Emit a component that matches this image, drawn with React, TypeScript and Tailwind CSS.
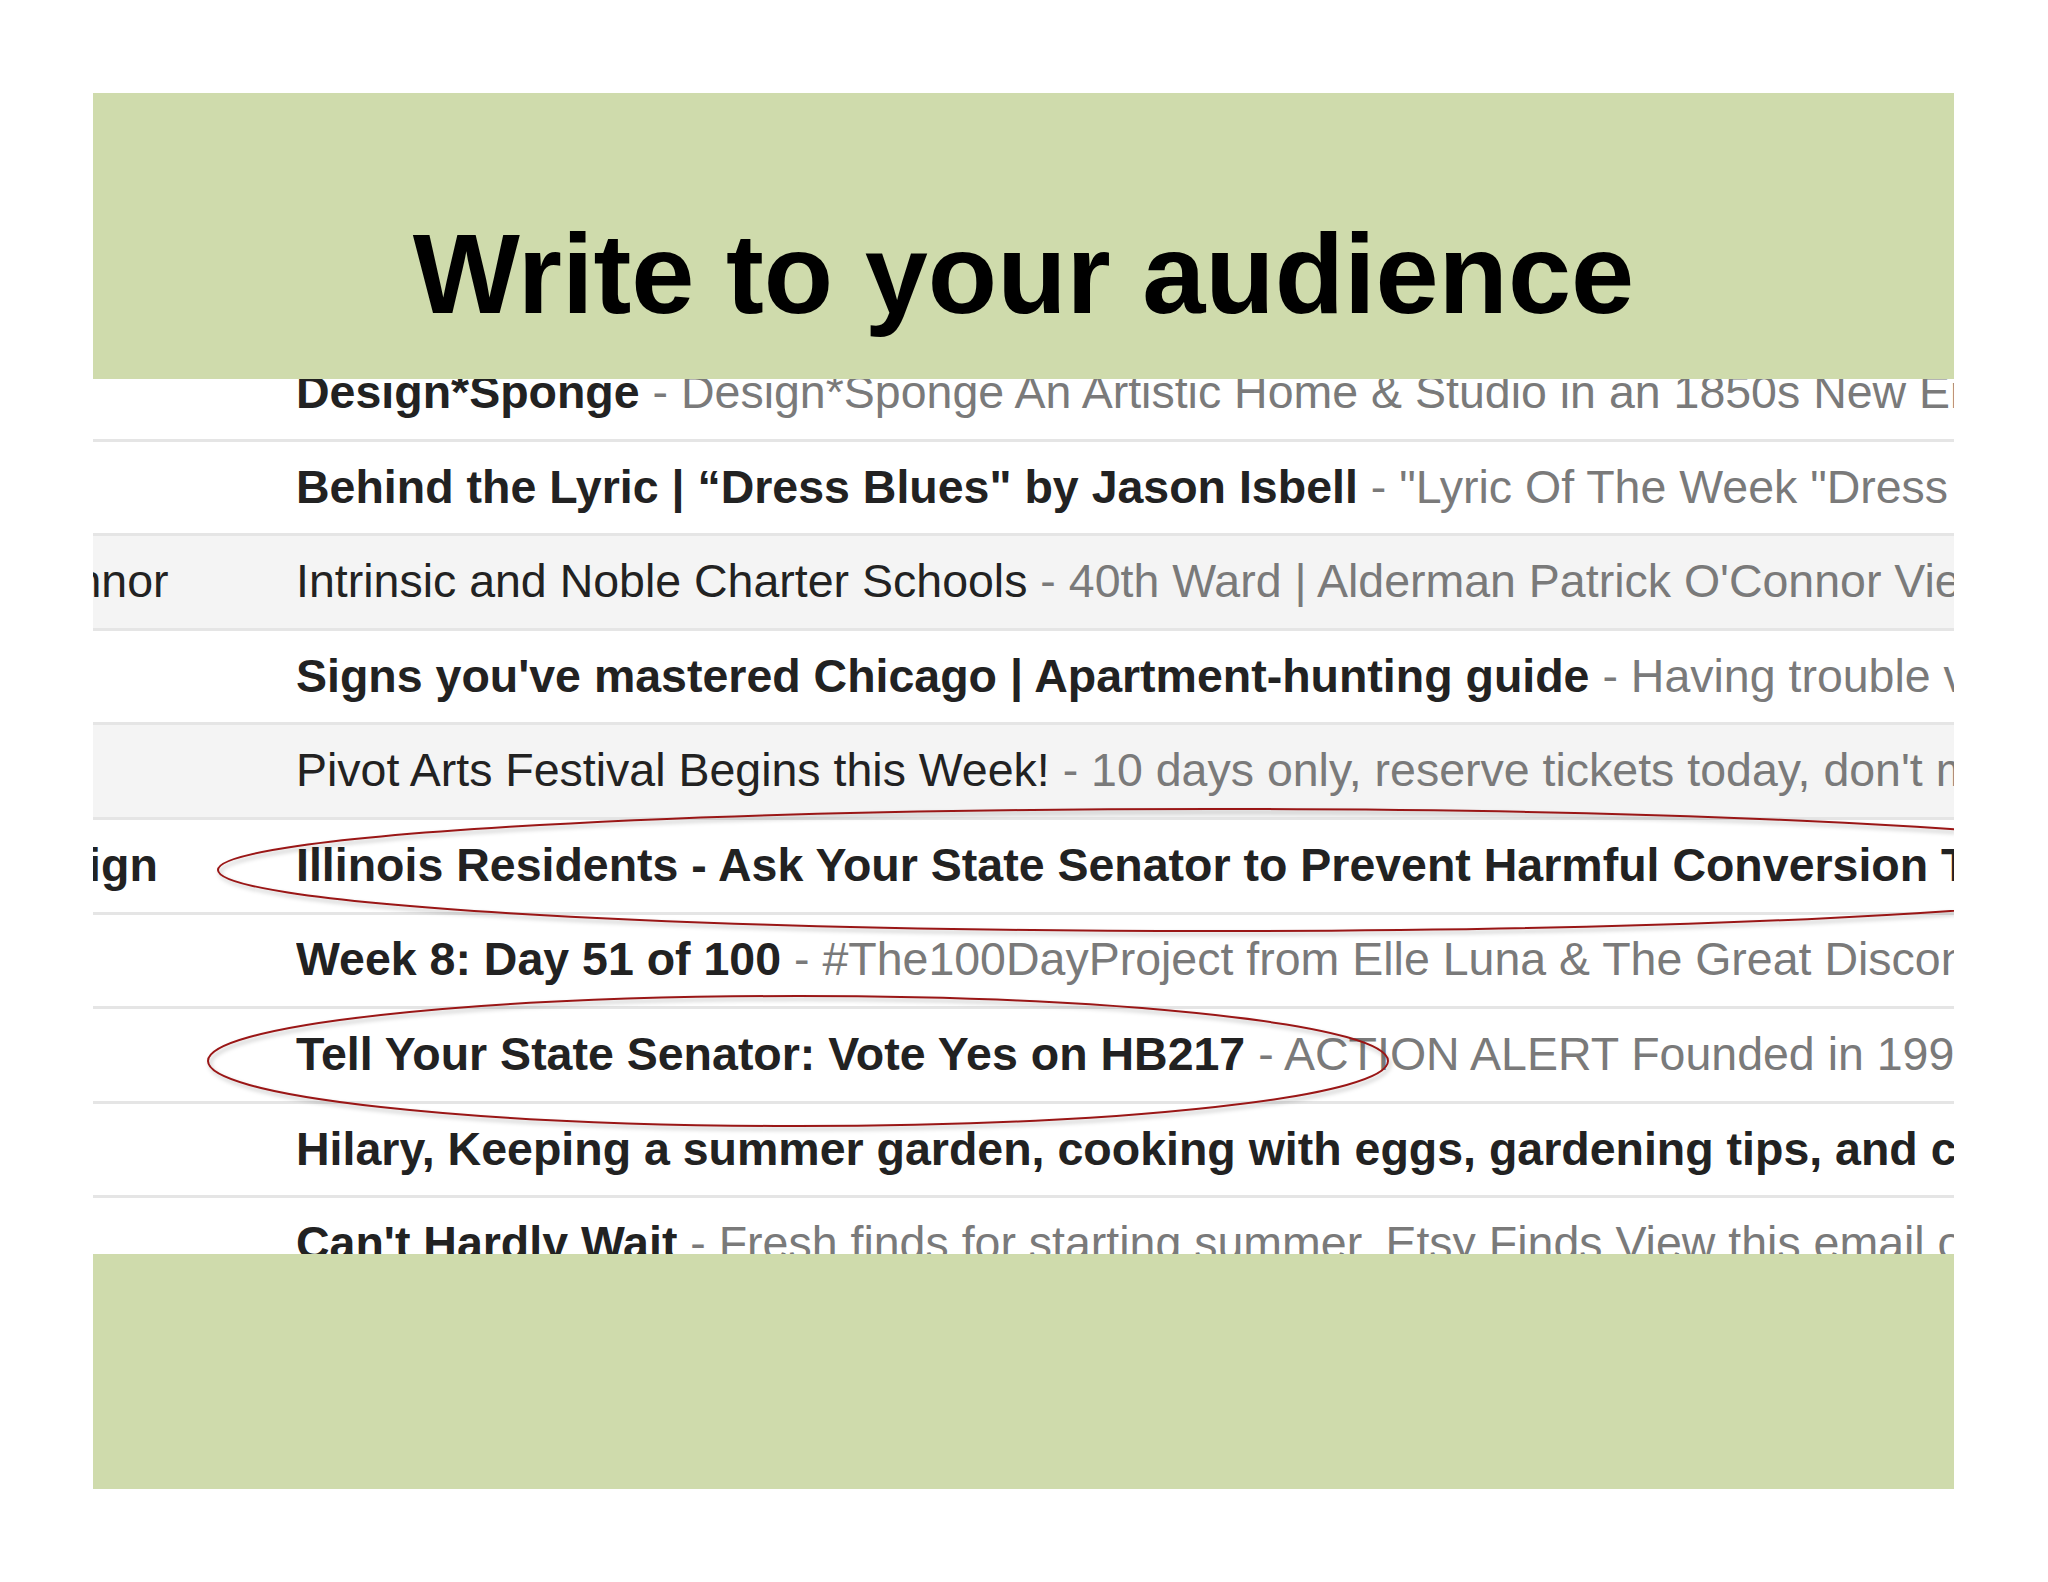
import React from "react";

type Mail = {
  sender?: string;
  senderBold?: boolean;
  senderShift?: string;
  subject: string;
  snippet?: string;
  unread: boolean;
};

const mails: Mail[] = [
  {
    subject: "Design*Sponge",
    snippet: "Design*Sponge An Artistic Home & Studio in an 1850s New England Farmhouse",
    unread: true,
  },
  {
    subject: "Behind the Lyric | \u201cDress Blues\" by Jason Isbell",
    snippet: "\"Lyric Of The Week \"Dress Blues\" by Jason Isbell",
    unread: true,
  },
  {
    sender: "Connor",
    senderShift: "-ml-[77px]",
    subject: "Intrinsic and Noble Charter Schools",
    snippet: "40th Ward | Alderman Patrick O'Connor View this email in your browser",
    unread: false,
  },
  {
    subject: "Signs you've mastered Chicago | Apartment-hunting guide",
    snippet: "Having trouble viewing this email?",
    unread: true,
  },
  {
    subject: "Pivot Arts Festival Begins this Week!",
    snippet: "10 days only, reserve tickets today, don't miss out",
    unread: false,
  },
  {
    sender: "Campaign",
    senderBold: true,
    senderShift: "-ml-[160px]",
    subject: "Illinois Residents - Ask Your State Senator to Prevent Harmful Conversion Therapy",
    unread: true,
  },
  {
    subject: "Week 8: Day 51 of 100",
    snippet: "#The100DayProject from Elle Luna & The Great Discontent",
    unread: true,
  },
  {
    subject: "Tell Your State Senator: Vote Yes on HB217",
    snippet: "ACTION ALERT Founded in 1995, Equality Illinois",
    unread: true,
  },
  {
    subject: "Hilary, Keeping a summer garden, cooking with eggs, gardening tips, and crafts",
    unread: true,
  },
  {
    subject: "Can't Hardly Wait",
    snippet: "Fresh finds for starting summer. Etsy Finds View this email online",
    unread: true,
  },
];

function MailRow({ mail }: { mail: Mail }) {
  return (
    <div
      className={`flex items-center h-[94.6px] border-b-[3px] border-[#e5e5e5] ${
        mail.unread ? "bg-white" : "bg-[#f4f4f4]"
      }`}
    >
      {/* sender column, cut off on the left */}
      <div className="w-[203px] shrink-0 overflow-hidden whitespace-nowrap">
        {mail.sender && (
          <span
            className={`inline-block text-[#222] ${mail.senderShift} ${
              mail.senderBold ? "font-bold" : "font-normal"
            }`}
          >
            {mail.sender}
          </span>
        )}
      </div>
      <div className="flex-1 overflow-hidden whitespace-nowrap">
        <span className={`text-[#222] ${mail.unread ? "font-bold" : "font-normal"}`}>
          {mail.subject}
        </span>
        {mail.snippet && <span className="text-[#7a7a7a]"> - {mail.snippet}</span>}
      </div>
    </div>
  );
}

export default function App() {
  return (
    <div className="min-h-screen bg-white pt-[93px] pl-[93px] font-['Liberation_Sans',Arial,sans-serif]">
      <div className="w-[1861px]">
        {/* Title band */}
        <div className="h-[286px] bg-[#cfdbac] pt-[124px] text-center">
          <h1 className="text-[113.5px] leading-none font-bold text-black">Write to your audience</h1>
        </div>

        {/* Cropped inbox screenshot */}
        <div className="relative h-[875px] overflow-hidden bg-white text-[46.5px]">
          <div className="-mt-[32px]">
            {mails.map((m, i) => (
              <MailRow key={i} mail={m} />
            ))}
          </div>

          {/* Hand-drawn highlight ellipses */}
          <svg
            className="absolute inset-0 pointer-events-none"
            width="1861"
            height="875"
            viewBox="0 0 1861 875"
            style={{ filter: "drop-shadow(2px 3px 2px rgba(0,0,0,0.28))" }}
          >
            <ellipse cx="1120" cy="491" rx="995" ry="61" fill="none" stroke="#9a1616" strokeWidth="2" />
            <ellipse cx="705" cy="682" rx="590" ry="65" fill="none" stroke="#9a1616" strokeWidth="2" />
          </svg>
        </div>

        {/* Bottom band */}
        <div className="h-[235px] bg-[#cfdbac]" />
      </div>
    </div>
  );
}
